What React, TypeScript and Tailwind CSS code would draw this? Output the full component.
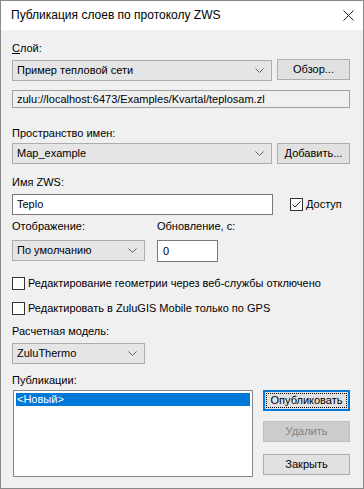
import { useState } from 'react';

const FONT = { fontFamily: '"Segoe UI", "Liberation Sans", Arial, sans-serif' };

function Chevron() {
  return (
    <svg width="9" height="5" viewBox="0 0 9 5" className="shrink-0">
      <path d="M0.5 0.5 L4.5 4.5 L8.5 0.5" fill="none" stroke="#606060" strokeWidth="1" />
    </svg>
  );
}

function Combo({ value, className }: { value: string; className: string }) {
  return (
    <div className={`h-[21px] flex items-center justify-between pl-[4px] pr-[7px] bg-[#e5e5e5] border border-[#adadad] text-black ${className}`}>
      <span>{value}</span>
      <Chevron />
    </div>
  );
}

function Btn({ label, className = '' }: { label: string; className?: string }) {
  return (
    <div className={`h-[21px] flex items-center justify-center bg-[#e1e1e1] border border-[#adadad] text-black ${className}`}>
      {label}
    </div>
  );
}

function Check({ checked, label }: { checked?: boolean; label: string }) {
  return (
    <div className="flex items-center gap-[3px]">
      <div className="w-[13px] h-[13px] border border-[#333] bg-white flex items-center justify-center">
        {checked && (
          <svg width="11" height="11" viewBox="0 0 11 11">
            <path d="M1.5 5.5 L4 8 L9.5 2.5" fill="none" stroke="#222" strokeWidth="1" />
          </svg>
        )}
      </div>
      <span>{label}</span>
    </div>
  );
}

export default function App() {
  const [sel] = useState(0);
  return (
    <div className="w-[364px] h-[489px] bg-[#f0f0f0] border border-[#8a8a8a] text-[11px] leading-[15px] text-black flex flex-col" style={FONT}>
      <div className="h-[29px] bg-white flex items-center justify-between pl-[10px] pr-[9px] shrink-0">
        <span className="text-[12px]">Публикация слоев по протоколу ZWS</span>
        <svg width="11" height="11" viewBox="0 0 11 11">
          <path d="M0.5 0.5 L10.5 10.5 M10.5 0.5 L0.5 10.5" stroke="#222" strokeWidth="1" />
        </svg>
      </div>

      <div className="flex flex-col pl-[11px] pr-[13px]">
        <div className="mt-[11px] h-[15px]"><span className="underline">С</span>лой:</div>
        <div className="mt-[4px] flex gap-[5px]">
          <Combo value="Пример тепловой сети" className="w-[260px]" />
          <Btn label="Обзор..." className="flex-1 -mt-[1px]" />
        </div>
        <div className="mt-[9px] h-[18px] border border-[#a0a0a0] bg-[#f0f0f0] pl-[4px] flex items-center">
          zulu://localhost:6473/Examples/Kvartal/teplosam.zl
        </div>

        <div className="mt-[18px] h-[15px]">Пространство имен:</div>
        <div className="mt-[2px] flex gap-[5px]">
          <Combo value="Map_example" className="w-[260px]" />
          <Btn label="Добавить..." className="flex-1" />
        </div>

        <div className="mt-[11px] h-[15px]">Имя ZWS:</div>
        <div className="mt-[4px] flex items-center">
          <div className="w-[261px] h-[21px] border border-[#7a7a7a] bg-white pl-[4px] flex items-center">Teplo</div>
          <div className="ml-[17px]"><Check checked label="Доступ" /></div>
        </div>

        <div className="mt-[4px] flex">
          <div className="w-[145px]">
            <div className="h-[15px]">Отображение:</div>
            <Combo value="По умолчанию" className="mt-[6px] w-[133px]" />
          </div>
          <div>
            <div className="h-[15px]">Обновление, с:</div>
            <div className="mt-[6px] w-[61px] h-[22px] border border-[#7a7a7a] bg-white pl-[5px] flex items-center">0</div>
          </div>
        </div>

        <div className="mt-[14px] flex flex-col gap-[10px]">
          <Check label="Редактирование геометрии через веб-службы отключено" />
          <Check label="Редактировать в ZuluGIS Mobile только по GPS" />
        </div>

        <div className="mt-[8px] h-[15px]">Расчетная модель:</div>
        <Combo value="ZuluThermo" className="mt-[4px] w-[133px]" />

        <div className="mt-[9px] h-[15px]">Публикации:</div>
        <div className="mt-[2px] flex">
          <div className="w-[240px] h-[87px] border border-[#828790] bg-white p-[2px] ml-[1px]">
            <div className={`h-[13px] leading-[13px] pl-[1px] ${sel === 0 ? 'bg-[#0078d7] text-white' : ''}`}>&lt;Новый&gt;</div>
          </div>
          <div className="ml-[10px] flex-1 flex flex-col">
            <div className="h-[21px] border-2 border-[#0078d7] bg-[#e1e1e1] p-[1px]">
              <div className="h-full border border-dotted border-black flex items-center justify-center">Опубликовать</div>
            </div>
            <div className="mt-[10px] h-[21px] flex items-center justify-center bg-[#cccccc] border border-[#bfbfbf] text-[#838383]">Удалить</div>
            <Btn label="Закрыть" className="mt-[12px]" />
          </div>
        </div>
      </div>
    </div>
  );
}
